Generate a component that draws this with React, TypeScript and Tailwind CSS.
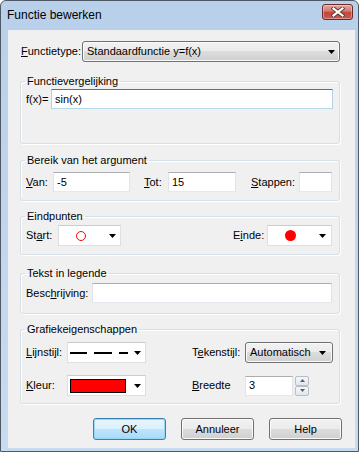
import React from 'react';

const font = "font-['Liberation_Sans',Arial,sans-serif]";

const btnFace =
  "bg-[linear-gradient(to_bottom,#f2f2f2_0%,#ebebeb_50%,#dddddd_50%,#cfcfcf_100%)] border border-[#707070] rounded-[3px] shadow-[inset_0_0_0_1px_#fbfbfb]";

const inputBox = "bg-white border border-[#e2e3ea] border-t-[#abadb3] border-b-[#e3e9ef]";

const pickBox = "bg-white border border-[#dcdfe4] border-t-[#c9ccd1] flex items-center";

const Arrow: React.FC = () => (
  <svg width="7" height="4" viewBox="0 0 7 4" className="shrink-0">
    <path d="M0 0H7L3.5 4Z" fill="#000" />
  </svg>
);

const CloseButton: React.FC = () => (
  <div className="mt-[3px] w-[31px] h-[16px] rounded-[3px] border border-[#6b2b2b] bg-[linear-gradient(to_bottom,#e2a79f_0%,#d27a70_45%,#c2463b_50%,#cb5a4e_100%)] shadow-[inset_0_0_0_1px_rgba(255,255,255,0.35)] flex items-center justify-center">
    <svg width="14" height="10" viewBox="0 0 14 10">
      <path d="M2.5 1.5L11.5 8.5M11.5 1.5L2.5 8.5" stroke="#5c3636" strokeWidth="4" strokeLinecap="square" />
      <path d="M2.5 1.5L11.5 8.5M11.5 1.5L2.5 8.5" stroke="#ffffff" strokeWidth="2.2" strokeLinecap="square" />
    </svg>
  </div>
);

const Group: React.FC<{ title: string; className: string; children: React.ReactNode }> = ({ title, className, children }) => (
  <fieldset
    className={`w-[320px] border border-[#d5dfe5] rounded-[3px] pl-[4px] pr-[6px] shadow-[inset_1px_1px_0_#ffffff,1px_1px_0_#ffffff] ${className}`}
  >
    <legend className="px-[2px] leading-[14px]">{title}</legend>
    <div className="ml-[1px]">{children}</div>
  </fieldset>
);

const U: React.FC<{ children: React.ReactNode }> = ({ children }) => <span className="underline underline-offset-[1px]">{children}</span>;

const SpinBtn: React.FC<{ up?: boolean }> = ({ up }) => (
  <div className="h-[10px] w-[14px] border border-[#b8bec6] rounded-[2px] bg-[linear-gradient(to_bottom,#f6f7f8,#e3e6ea)] flex items-center justify-center">
    <svg width="5" height="3" viewBox="0 0 5 3">
      <path d={up ? 'M0 3H5L2.5 0Z' : 'M0 0H5L2.5 3Z'} fill="#4d6185" />
    </svg>
  </div>
);

export default function App() {
  return (
    <div
      className={`w-[359px] h-[452px] flex flex-col border border-[#4f5966] rounded-t-[6px] bg-[linear-gradient(to_bottom,#b9d0ea,#c9dbef)] text-[11px] text-black overflow-hidden ${font}`}
    >
      {/* title bar */}
      <div className="h-[29px] shrink-0 flex items-start justify-between pl-[6px] pr-[5px]">
        <span className="text-[12px] leading-[28px]">Functie bewerken</span>
        <CloseButton />
      </div>

      {/* client area */}
      <div className="flex-1 ml-[7px] mr-[3px] mb-[3px] bg-[#f0f0f0] pl-[12px] flex flex-col">
        <div className="mt-[11px] h-[21px] flex items-center">
          <span className="w-[62px] pl-[1px]">
            <U>F</U>unctietype:
          </span>
          <div className={`w-[258px] h-[21px] flex items-center justify-between pl-[4px] pr-[4px] ${btnFace}`}>
            <span>Standaardfunctie y=f(x)</span>
            <Arrow />
          </div>
        </div>

        <Group title="Functievergelijking" className="mt-[12px] h-[70px]">
          <div className="mt-[1px] flex items-center">
            <span className="w-[25px]">f(x)=</span>
            <div className="w-[282px] h-[20px] bg-white border border-[#b5cfe7] border-t-[#3d7bad] border-b-[#b7d9ed] pl-[3px] flex items-center">
              sin(x)
            </div>
          </div>
        </Group>

        <Group title="Bereik van het argument" className="mt-[9px] h-[48px]">
          <div className="mt-[5px] flex items-center">
            <span className="w-[27px]">
              <U>V</U>an:
            </span>
            <div className={`w-[77px] h-[20px] pl-[3px] flex items-center ${inputBox}`}>-5</div>
            <span className="ml-[14px] w-[24px]">
              <U>T</U>ot:
            </span>
            <div className={`w-[68px] h-[20px] pl-[3px] flex items-center ${inputBox}`}>15</div>
            <span className="ml-[15px] w-[48px]">
              <U>S</U>tappen:
            </span>
            <div className={`w-[33px] h-[20px] ${inputBox}`} />
          </div>
        </Group>

        <Group title="Eindpunten" className="mt-[8px] h-[46px]">
          <div className="mt-[2px] flex items-center">
            <span className="w-[32px]">
              St<U>a</U>rt:
            </span>
            <div className={`w-[63px] h-[21px] justify-between pl-[17px] pr-[4px] ${pickBox}`}>
              <span className="w-[10px] h-[10px] rounded-full border border-[#ff0000]" />
              <Arrow />
            </div>
            <span className="ml-[112px] w-[34px]">
              E<U>i</U>nde:
            </span>
            <div className={`w-[65px] h-[21px] justify-between pl-[17px] pr-[5px] ${pickBox}`}>
              <span className="w-[11px] h-[11px] rounded-full bg-[#ff0000]" />
              <Arrow />
            </div>
          </div>
        </Group>

        <Group title="Tekst in legende" className="mt-[11px] h-[48px]">
          <div className="mt-[3px] flex items-center">
            <span className="w-[66px]">
              Besc<U>h</U>rijving:
            </span>
            <div className={`w-[240px] h-[20px] ${inputBox}`} />
          </div>
        </Group>

        <Group title="Grafiekeigenschappen" className="mt-[8px] h-[82px]">
          <div className="mt-[6px] flex items-center">
            <span className="w-[41px]">
              <U>L</U>ijnstijl:
            </span>
            <div className={`w-[79px] h-[21px] justify-between pl-[2px] pr-[4px] ${pickBox}`}>
              <svg width="58" height="2" viewBox="0 0 58 2">
                <rect x="0" y="0" width="17" height="2" fill="#000" />
                <rect x="24" y="0" width="18" height="2" fill="#000" />
                <rect x="49" y="0" width="9" height="2" fill="#000" />
              </svg>
              <Arrow />
            </div>
            <span className="ml-[46px] w-[53px]">
              T<U>e</U>kenstijl:
            </span>
            <div className={`w-[88px] h-[21px] flex items-center justify-between pl-[4px] pr-[6px] ${btnFace}`}>
              <span>Automatisch</span>
              <Arrow />
            </div>
          </div>
          <div className="mt-[12px] flex items-center">
            <span className="w-[41px]">
              <U>K</U>leur:
            </span>
            <div className={`w-[79px] h-[21px] justify-between pl-[2px] pr-[4px] ${pickBox}`}>
              <span className="w-[56px] h-[14px] bg-[#ff0000] border border-black" />
              <Arrow />
            </div>
            <span className="ml-[46px] w-[53px]">
              <U>B</U>reedte
            </span>
            <div className={`w-[48px] h-[20px] pl-[3px] flex items-center ${inputBox}`}>3</div>
            <div className="ml-[2px] flex flex-col">
              <SpinBtn up />
              <SpinBtn />
            </div>
          </div>
        </Group>

        <div className="mt-[14px] pl-[73px] flex gap-[15px]">
          <div className="w-[73px] h-[22px] rounded-[3px] border border-[#3c7fb1] shadow-[inset_0_0_0_1px_#97d6f7] bg-[linear-gradient(to_bottom,#eaf6fd_0%,#d9f0fc_50%,#bee6fd_50%,#a7d9f5_100%)] flex items-center justify-center">
            OK
          </div>
          <div className={`w-[73px] h-[22px] flex items-center justify-center ${btnFace}`}>Annuleer</div>
          <div className={`w-[73px] h-[22px] flex items-center justify-center ${btnFace}`}>Help</div>
        </div>
      </div>
    </div>
  );
}
